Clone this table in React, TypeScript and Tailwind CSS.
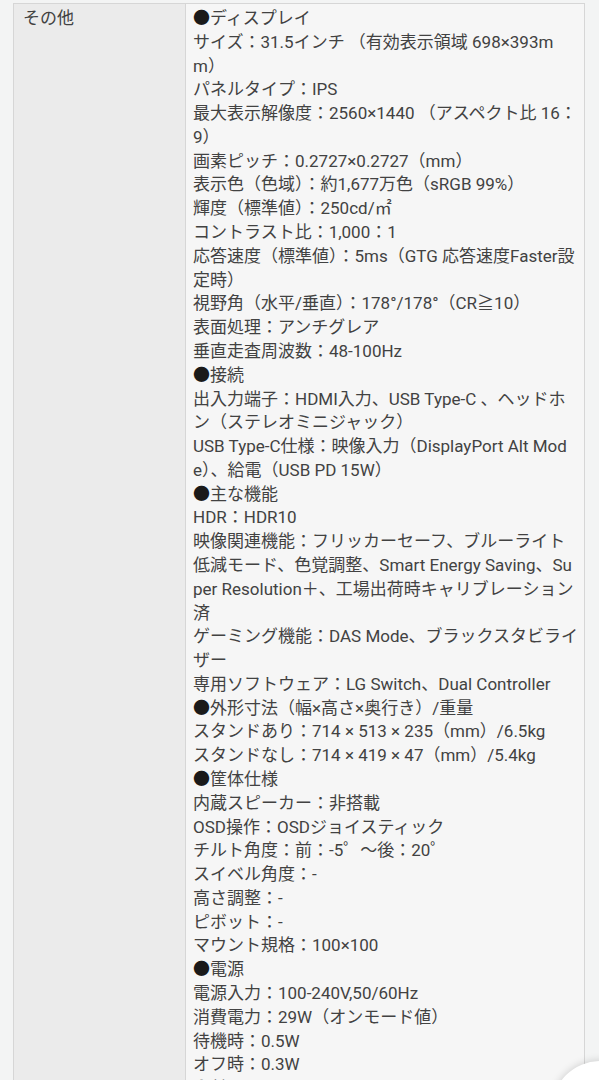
const lines = [
  '●ディスプレイ',
  'サイズ：31.5インチ （有効表示領域 698×393m',
  'm）',
  'パネルタイプ：IPS',
  '最大表示解像度：2560×1440 （アスペクト比 16：',
  '9）',
  '画素ピッチ：0.2727×0.2727（mm）',
  '表示色（色域）：約1,677万色（sRGB 99%）',
  '輝度（標準値）：250cd/㎡',
  'コントラスト比：1,000：1',
  '応答速度（標準値）：5ms（GTG 応答速度Faster設',
  '定時）',
  '視野角（水平/垂直）：178°/178°（CR≧10）',
  '表面処理：アンチグレア',
  '垂直走査周波数：48-100Hz',
  '●接続',
  '出入力端子：HDMI入力、USB Type-C 、ヘッドホ',
  'ン（ステレオミニジャック）',
  'USB Type-C仕様：映像入力（DisplayPort Alt Mod',
  'e）、給電（USB PD 15W）',
  '●主な機能',
  'HDR：HDR10',
  '映像関連機能：フリッカーセーフ、ブルーライト',
  '低減モード、色覚調整、Smart Energy Saving、Su',
  'per Resolution＋、工場出荷時キャリブレーション',
  '済',
  'ゲーミング機能：DAS Mode、ブラックスタビライ',
  'ザー',
  '専用ソフトウェア：LG Switch、Dual Controller',
  '●外形寸法（幅×高さ×奥行き）/重量',
  'スタンドあり：714 × 513 × 235（mm）/6.5kg',
  'スタンドなし：714 × 419 × 47（mm）/5.4kg',
  '●筐体仕様',
  '内蔵スピーカー：非搭載',
  'OSD操作：OSDジョイスティック',
  'チルト角度：前：-5゜～後：20゜',
  'スイベル角度：-',
  '高さ調整：-',
  'ピボット：-',
  'マウント規格：100×100',
  '●電源',
  '電源入力：100-240V,50/60Hz',
  '消費電力：29W（オンモード値）',
  '待機時：0.5W',
  'オフ時：0.3W',
  '●付属品',
];

function SpecLine({ text }: { text: string }) {
  if (text.startsWith('●')) {
    return (
      <div className="whitespace-nowrap">
        <span className="text-[#1a1a1a]">●</span>
        {text.slice(1)}
      </div>
    );
  }
  return <div className="whitespace-nowrap">{text}</div>;
}

export default function App() {
  return (
    <div
      className="relative h-[1080px] overflow-hidden bg-[#f3f4f4] pl-[13px] pr-[14px] pt-[3px] text-[17px] leading-[23.78px] text-[#424242]"
      style={{ fontFamily: 'Roboto, "Noto Sans CJK JP", "Noto Sans", sans-serif' }}
    >
      <div className="flex border-t border-l border-r border-[#d6d6d6]">
        <div className="w-[172px] shrink-0 border-r border-[#d6d6d6] bg-[#ebebeb] pl-[9px] pt-[3px]">
          その他
        </div>
        <div className="min-w-0 flex-1 bg-[#f6f6f6] pl-[7px] pt-[3px]">
          {lines.map((l, i) => (
            <SpecLine key={i} text={l} />
          ))}
        </div>
      </div>
      <div className="absolute left-[552px] top-[1061px] h-[96px] w-[96px] rounded-full bg-white shadow-[0_0_8px_rgba(0,0,0,0.18)]" />
    </div>
  );
}
